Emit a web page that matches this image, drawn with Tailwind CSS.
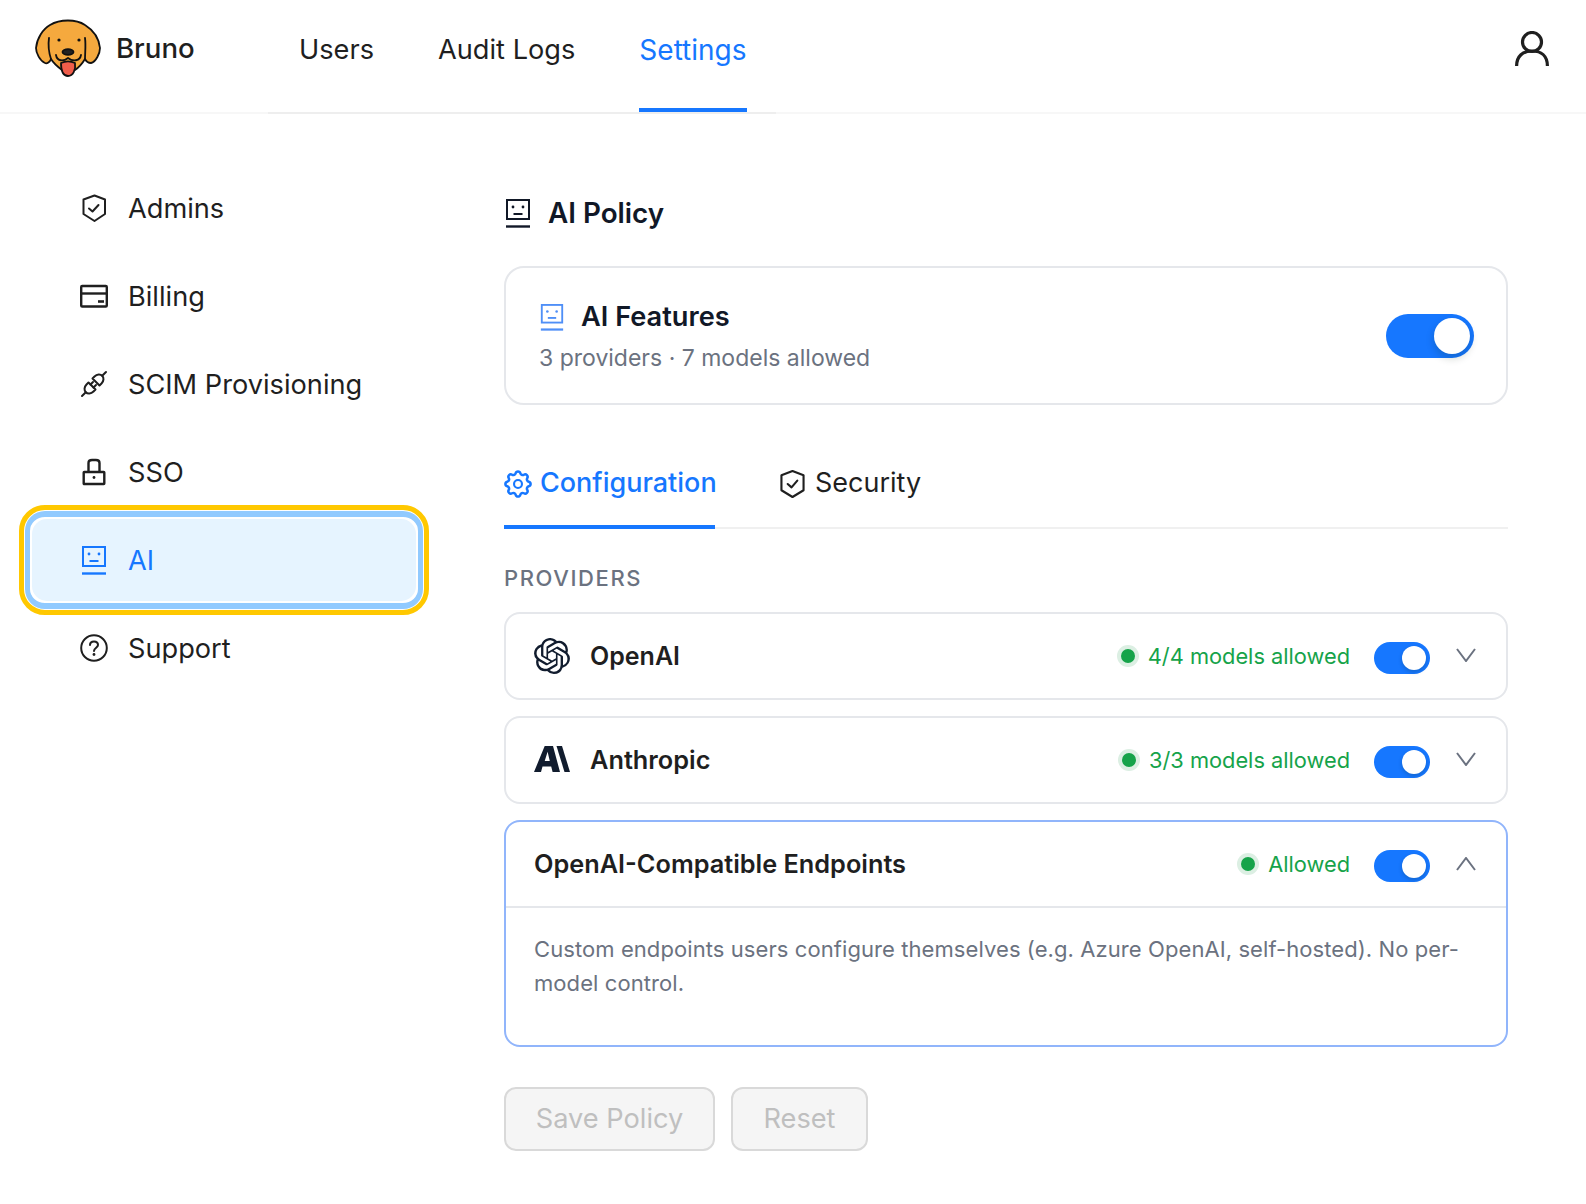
<!doctype html>
<html lang="en">
<head>
<meta charset="utf-8">
<title>Bruno Settings</title>
<script src="https://cdn.jsdelivr.net/npm/@tailwindcss/browser@4"></script>
</head>
<body class="bg-white font-['Inter',sans-serif] text-[#1f1f1f] antialiased">
<div class="w-[1586px] h-[1204px] overflow-hidden">
  <!-- Top bar -->
  <header class="h-[114px] flex items-stretch border-b-2 border-[#f7f7f7] pl-[34px] pr-[34px]">
    <div class="w-[234px] flex items-center gap-[14px] pb-[16px]">
      <svg class="w-[68px] h-[60px] shrink-0" viewBox="34 18 68 60" fill="none" stroke="#111" stroke-width="1.8" stroke-linecap="round" stroke-linejoin="round">
        <path fill="#f5a93e" d="M36 48C37 38 43 29 50 25C60 19 76 19 85 25C93 30 99 38 100 48C100 53 96 62 91 63C88 63 86 61 85 59C82 64 78 68 75 70L62 70C58 67 54 64 51 59C50 62 47 64 45 63C40 61 36 53 36 48Z"/>
        <path d="M49 38C48 45 49 53 51 59M85 38C86 45 85 53 85 59"/>
        <path fill="#ef5d4b" d="M61 63C61 70 63 76 68 76C73 76 76 70 75 63C71 61 65 61 61 63Z"/>
        <path d="M56 55C57 61 63 62 68 58C73 62 80 61 81 55"/>
        <ellipse cx="68" cy="52" rx="5.5" ry="2.8" fill="#222"/>
        <circle cx="59" cy="40" r="1.6" fill="#111" stroke="none"/>
        <circle cx="79" cy="40" r="1.6" fill="#111" stroke="none"/>
      </svg>
      <span class="text-[27.6px] leading-none font-medium mt-[2px]">Bruno</span>
    </div>
    <nav class="w-[508px] -mb-[2px] flex gap-[64px] pl-[31px] text-[27.2px] border-b-2 border-[#eeeeee]">
      <a class="flex items-center pb-[12px]">Users</a>
      <a class="flex items-center pb-[12px]">Audit Logs</a>
      <a class="flex items-center pb-[8px] text-[28px] text-[#1677ff] border-b-4 border-[#1677ff]">Settings</a>
    </nav>
    <div class="ml-auto flex items-center pb-[14px] pr-[3px]">
      <svg class="w-[34px] h-[36px]" viewBox="0 0 34 36" fill="none" stroke="#1f1f1f" stroke-width="3.2"><circle cx="17" cy="11" r="9.5"/><path d="M1.6 35C1.6 25 8 20 17 20C26 20 32.4 25 32.4 35"/></svg>
    </div>
  </header>

  <div class="flex">
    <!-- Sidebar -->
    <aside class="w-[504px] pt-[50px] text-[27.2px]">
      <a class="h-[88px] pl-[80px] flex items-center gap-[20px]">
        <svg class="w-[28px] h-[28px]" viewBox="0 0 28 28" fill="none" stroke="#1f1f1f" stroke-width="2" stroke-linejoin="round" stroke-linecap="round"><path d="M14.5 1.5L25 5.5V20L14.5 27L3.5 20V5.5Z"/><path d="M9 14.5L12.5 17.5L18.5 11"/></svg>
        <span class="mt-[2px]">Admins</span>
      </a>
      <a class="h-[88px] pl-[80px] flex items-center gap-[20px]">
        <svg class="w-[28px] h-[28px]" viewBox="0 0 28 28" fill="none" stroke="#1f1f1f" stroke-width="2.4"><rect x="1.2" y="4" width="25.6" height="20.5" rx="1"/><path d="M1 11.5H27"/><path d="M18 19.5H24" stroke-width="2.6"/></svg>
        <span class="mt-[2px]">Billing</span>
      </a>
      <a class="h-[88px] pl-[80px] flex items-center gap-[20px]">
        <svg class="w-[28px] h-[28px]" viewBox="0 0 28 28" fill="none" stroke="#1f1f1f" stroke-width="2" stroke-linecap="round" stroke-linejoin="round"><path d="M12.5 8.5L19.5 15.5L21.5 13.5C24 11 24 7.5 22.2 5.8C20.5 4 17 4 14.5 6.5Z"/><path d="M22.2 5.8L26 2"/><path d="M8.5 12.5L15.5 19.5L13.5 21.5C11 24 7.5 24 5.8 22.2C4 20.5 4 17 6.5 14.5Z"/><path d="M5.8 22.2L2 26M10.5 14.5L13 12M13.5 17.5L16 15"/></svg>
        <span class="mt-[2px]">SCIM Provisioning</span>
      </a>
      <a class="h-[88px] pl-[80px] flex items-center gap-[20px]">
        <svg class="w-[28px] h-[28px]" viewBox="0 0 28 28" fill="none" stroke="#1f1f1f" stroke-width="2.4"><rect x="3.7" y="14" width="20.6" height="12" rx="0.5"/><path d="M8.5 14V5C8.5 3 10 2 12 2H16C18 2 19.5 3 19.5 5V14"/><circle cx="14" cy="19.5" r="1.4" fill="#1f1f1f" stroke="none"/></svg>
        <span class="mt-[2px]">SSO</span>
      </a>
      <div class="-my-[11px] ml-[19px] w-[410px] h-[110px] border-[5px] border-[#ffc800] rounded-[26px] p-px bg-white">
        <div class="h-full border-x-[5px] border-y-[6px] border-[#91caff] rounded-[20px] p-[2px]">
          <a class="h-full rounded-[15px] bg-[#e6f4ff] text-[#1677ff] pl-[48px] flex items-center gap-[20px]">
            <svg class="w-[28px] h-[32px]" viewBox="0 0 28 32" fill="none" stroke="#1677ff" stroke-width="2"><rect x="3" y="3" width="22" height="19"/><path d="M2 29.5H26" stroke-width="2.4"/><path d="M9.5 17H18.5" stroke-width="2"/><circle cx="9" cy="10" r="1.4" fill="#1677ff" stroke="none"/><circle cx="19" cy="10" r="1.4" fill="#1677ff" stroke="none"/></svg>
            <span class="mt-[2px]">AI</span>
          </a>
        </div>
      </div>
      <a class="h-[88px] pl-[80px] flex items-center gap-[20px]">
        <svg class="w-[28px] h-[28px]" viewBox="0 0 28 28" fill="none" stroke="#1f1f1f" stroke-width="2"><circle cx="14" cy="14" r="12.8"/><path d="M10 11C10 8.5 12 7.5 14 7.5C16.5 7.5 18 9 18 11C18 13.5 14 14 14 17" stroke-linecap="round"/><circle cx="14" cy="20.5" r="1.4" fill="#1f1f1f" stroke="none"/></svg>
        <span class="mt-[2px]">Support</span>
      </a>
    </aside>

    <!-- Main -->
    <main class="w-[1004px] pt-[80px]">
      <div class="h-[38px] flex items-center gap-[16px]">
        <svg class="w-[28px] h-[32px]" viewBox="0 0 28 32" fill="none" stroke="#111827" stroke-width="2"><rect x="3" y="3" width="22" height="19"/><path d="M2 29.5H26" stroke-width="2.4"/><path d="M9.5 17H18.5"/><circle cx="9" cy="10" r="1.4" fill="#111827" stroke="none"/><circle cx="19" cy="10" r="1.4" fill="#111827" stroke="none"/></svg>
        <h1 class="mt-[2px] text-[27.8px] leading-none font-semibold text-[#111827]">AI Policy</h1>
      </div>

      <section class="mt-[34px] h-[139px] border-2 border-[#e5e7eb] rounded-[20px] pl-[33px] pr-[32px] flex items-center justify-between">
        <div class="mt-[2px]">
          <div class="flex items-center gap-[16px]">
            <svg class="w-[26px] h-[30px]" viewBox="0 0 28 32" fill="none" stroke="#4f8ff7" stroke-width="2"><rect x="3" y="3" width="22" height="19"/><path d="M2 29.5H26" stroke-width="2.4"/><path d="M9.5 17H18.5"/><circle cx="9" cy="10" r="1.4" fill="#4f8ff7" stroke="none"/><circle cx="19" cy="10" r="1.4" fill="#4f8ff7" stroke="none"/></svg>
            <h2 class="text-[27.2px] leading-[36px] font-semibold text-[#111827]">AI Features</h2>
          </div>
          <p class="text-[23px] leading-[32px] mt-[7px] text-[#6b7280]">3 providers · 7 models allowed</p>
        </div>
        <div class="w-[88px] h-[44px] rounded-full bg-[#1677ff] p-[4px] flex justify-end">
          <span class="w-[36px] h-[36px] rounded-full bg-white shadow-[0_4px_8px_rgba(0,35,11,0.2)]"></span>
        </div>
      </section>

      <div class="h-[124px] flex items-end gap-[65px] border-b-2 border-[#f0f0f0] text-[27px]">
        <a class="h-[72px] -mb-[2px] pb-[15px] border-b-4 border-[#1677ff] text-[#1677ff] font-medium flex items-center gap-[8px] w-[211px]">
          <svg class="w-[28px] h-[28px] shrink-0" viewBox="0 0 24 24" fill="none" stroke="#1677ff" stroke-width="1.8" stroke-linecap="round" stroke-linejoin="round"><path d="M10.325 4.317c.426 -1.756 2.924 -1.756 3.35 0a1.724 1.724 0 0 0 2.573 1.066c1.543 -.94 3.31 .826 2.37 2.37a1.724 1.724 0 0 0 1.065 2.572c1.756 .426 1.756 2.924 0 3.35a1.724 1.724 0 0 0 -1.066 2.573c.94 1.543 -.826 3.31 -2.37 2.37a1.724 1.724 0 0 0 -2.572 1.065c-.426 1.756 -2.924 1.756 -3.35 0a1.724 1.724 0 0 0 -2.573 -1.066c-1.543 .94 -3.31 -.826 -2.37 -2.37a1.724 1.724 0 0 0 -1.065 -2.572c-1.756 -.426 -1.756 -2.924 0 -3.35a1.724 1.724 0 0 0 1.066 -2.573c-.94 -1.543 .826 -3.31 2.37 -2.37c1 .608 2.296 .07 2.572 -1.065z" transform="translate(-2.4 -2.4) scale(1.2)"/><circle cx="12" cy="12" r="3.4"/></svg>
          <span>Configuration</span>
        </a>
        <a class="h-[72px] -mb-[2px] pb-[15px] border-b-4 border-transparent flex items-center gap-[10px]">
          <svg class="w-[25px] h-[30px] shrink-0" viewBox="0 0 26 30" fill="none" stroke="#1f1f1f" stroke-width="2.2" stroke-linejoin="round" stroke-linecap="round"><path d="M13 1.5L24.5 6V21.5L13 28.5L1.5 21.5V6Z"/><path d="M8 15L12 18.5L18 11.5"/></svg>
          <span>Security</span>
        </a>
      </div>

      <h3 class="mt-[35px] text-[22px] leading-[28px] font-medium tracking-[1.6px] text-[#6b7280]">PROVIDERS</h3>

      <div class="mt-[20px] h-[88px] border-2 border-[#e5e7eb] rounded-[16px] pl-[28px] pr-[30px] flex items-center">
        <svg class="w-[36px] h-[36px]" viewBox="0 0 24 24" fill="#111c2e"><path d="M22.2819 9.8211a5.9847 5.9847 0 0 0-.5157-4.9108 6.0462 6.0462 0 0 0-6.5098-2.9A6.0651 6.0651 0 0 0 4.9807 4.1818a5.9847 5.9847 0 0 0-3.9977 2.9 6.0462 6.0462 0 0 0 .7427 7.0966 5.98 5.98 0 0 0 .511 4.9107 6.051 6.051 0 0 0 6.5146 2.9001A5.9847 5.9847 0 0 0 13.2599 24a6.0557 6.0557 0 0 0 5.7718-4.2058 5.9894 5.9894 0 0 0 3.9977-2.9001 6.0557 6.0557 0 0 0-.7475-7.0729zm-9.022 12.6081a4.4755 4.4755 0 0 1-2.8764-1.0408l.1419-.0804 4.7783-2.7582a.7948.7948 0 0 0 .3927-.6813v-6.7369l2.02 1.1686a.071.071 0 0 1 .038.052v5.5826a4.504 4.504 0 0 1-4.4945 4.4944zm-9.6607-4.1254a4.4708 4.4708 0 0 1-.5346-3.0137l.142.0852 4.783 2.7582a.7712.7712 0 0 0 .7806 0l5.8428-3.3685v2.3324a.0804.0804 0 0 1-.0332.0615L9.74 19.9502a4.4992 4.4992 0 0 1-6.1408-1.6464zM2.3408 7.8956a4.485 4.485 0 0 1 2.3655-1.9728V11.6a.7664.7664 0 0 0 .3879.6765l5.8144 3.3543-2.0201 1.1685a.0757.0757 0 0 1-.071 0l-4.8303-2.7865A4.504 4.504 0 0 1 2.3408 7.872zm16.5963 3.8558L13.1038 8.364 15.1192 7.2a.0757.0757 0 0 1 .071 0l4.8303 2.7913a4.4944 4.4944 0 0 1-.6765 8.1042v-5.6772a.79.79 0 0 0-.407-.667zm2.0107-3.0231l-.142-.0852-4.7735-2.7818a.7759.7759 0 0 0-.7854 0L9.409 9.2297V6.8974a.0662.0662 0 0 1 .0284-.0615l4.8303-2.7866a4.4992 4.4992 0 0 1 6.6802 4.66zM8.3065 12.863l-2.02-1.1638a.0804.0804 0 0 1-.038-.0567V6.0742a4.4992 4.4992 0 0 1 7.3757-3.4537l-.142.0805L8.704 5.459a.7948.7948 0 0 0-.3927.6813zm1.0976-2.3654l2.602-1.4998 2.6069 1.4998v2.9994l-2.5974 1.4997-2.6067-1.4997Z"/></svg>
        <span class="ml-[20px] mt-[2px] text-[25px] font-semibold">OpenAI</span>
        <div class="ml-auto flex items-center text-[21.8px] text-[#16a34a]">
          <span class="w-[22px] h-[22px] rounded-full bg-[#dcefe3] flex items-center justify-center mr-[9px]"><span class="w-[14px] h-[14px] rounded-full bg-[#16a34a]"></span></span>
          4/4 models allowed
        </div>
        <div class="ml-[24px] mt-[4px] w-[56px] h-[32px] rounded-full bg-[#1677ff] p-[4px] flex justify-end"><span class="w-[24px] h-[24px] rounded-full bg-white shadow-[0_2px_4px_rgba(0,35,11,0.2)]"></span></div>
        <svg class="ml-[26px] -mt-[2px] w-[20px] h-[14px]" viewBox="0 0 20 14" fill="none" stroke="#6b7280" stroke-width="2"><path d="M1 1L10 13L19 1"/></svg>
      </div>

      <div class="mt-[16px] h-[88px] border-2 border-[#e5e7eb] rounded-[16px] pl-[28px] pr-[30px] flex items-center">
        <svg class="w-[36px] h-[28px] -mt-[2px]" viewBox="0 0 36 28" fill="#111c2e"><path d="M10.7 1H19L26 27H18.6L17.2 21.5H8.5L7 27H0ZM15.8 16L13.6 6.8L10.7 16Z"/><path d="M22.5 1H28L36 27H30.5Z"/></svg>
        <span class="ml-[20px] text-[25.3px] font-semibold">Anthropic</span>
        <div class="ml-auto flex items-center text-[21.8px] text-[#16a34a]">
          <span class="w-[22px] h-[22px] rounded-full bg-[#dcefe3] flex items-center justify-center mr-[9px]"><span class="w-[14px] h-[14px] rounded-full bg-[#16a34a]"></span></span>
          3/3 models allowed
        </div>
        <div class="ml-[24px] mt-[4px] w-[56px] h-[32px] rounded-full bg-[#1677ff] p-[4px] flex justify-end"><span class="w-[24px] h-[24px] rounded-full bg-white shadow-[0_2px_4px_rgba(0,35,11,0.2)]"></span></div>
        <svg class="ml-[26px] -mt-[2px] w-[20px] h-[14px]" viewBox="0 0 20 14" fill="none" stroke="#6b7280" stroke-width="2"><path d="M1 1L10 13L19 1"/></svg>
      </div>

      <div class="mt-[16px] h-[227px] border-2 border-[#91b5fb] rounded-[16px]">
        <div class="h-[86px] border-b-2 border-[#e5e7eb] pl-[28px] pr-[30px] flex items-center">
          <span class="text-[25.3px] font-semibold">OpenAI-Compatible Endpoints</span>
          <div class="ml-auto flex items-center text-[21.8px] text-[#16a34a]">
            <span class="w-[22px] h-[22px] rounded-full bg-[#dcefe3] flex items-center justify-center mr-[9px]"><span class="w-[14px] h-[14px] rounded-full bg-[#16a34a]"></span></span>
            Allowed
          </div>
          <div class="ml-[24px] mt-[4px] w-[56px] h-[32px] rounded-full bg-[#1677ff] p-[4px] flex justify-end"><span class="w-[24px] h-[24px] rounded-full bg-white shadow-[0_2px_4px_rgba(0,35,11,0.2)]"></span></div>
          <svg class="ml-[26px] w-[20px] h-[14px]" viewBox="0 0 20 14" fill="none" stroke="#6b7280" stroke-width="2"><path d="M1 13L10 1L19 13"/></svg>
        </div>
        <p class="px-[28px] pt-[24px] text-[22px] leading-[34px] text-[#6b7280] tracking-[0.08px]">Custom endpoints users configure themselves (e.g. Azure OpenAI, self-hosted). No per-model control.</p>
      </div>

      <div class="mt-[40px] flex gap-[16px] text-[27.2px] text-[#bfbfbf]">
        <button class="w-[211px] h-[64px] rounded-[12px] border-2 border-[#d9d9d9] bg-[#f5f5f5]">Save Policy</button>
        <button class="w-[137px] h-[64px] rounded-[12px] border-2 border-[#d9d9d9] bg-[#f5f5f5]">Reset</button>
      </div>
    </main>
  </div>
</div>
</body>
</html>
